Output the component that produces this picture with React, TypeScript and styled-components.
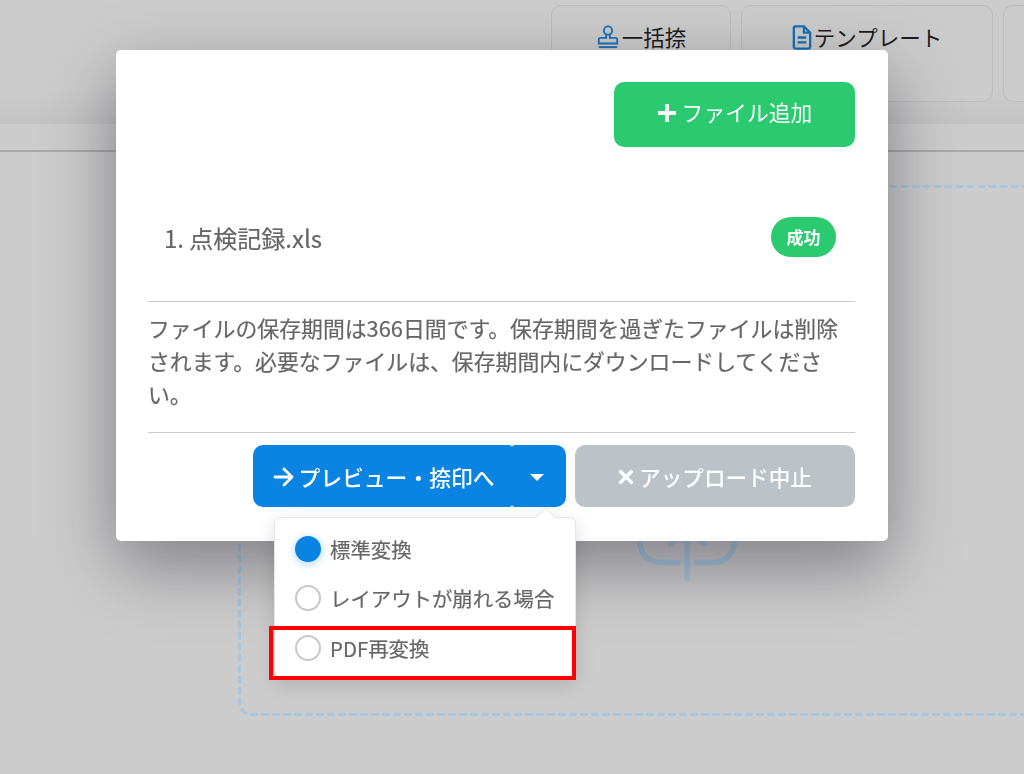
import React from 'react'
import styled, { createGlobalStyle } from 'styled-components'

const FONT = `'Noto Sans CJK JP', 'Noto Sans', sans-serif`

const Global = createGlobalStyle`
  html, body {
    margin: 0;
    padding: 0;
    height: 100%;
    overflow: hidden;
    background: #ccc;
    font-family: ${FONT};
  }
`

// the page sits dimmed behind the modal, so its colours are the dimmed ones
const Page = styled.div`
  width: 1180px;
  height: 774px;
  display: flex;
  flex-direction: column;
  background: #ccc;
`

const Header = styled.header`
  height: 124px;
  box-sizing: border-box;
  padding: 5px 0 0 551px;
  display: flex;
  gap: 10px;
  background: linear-gradient(#ccc 70%, #c3c3c3);
`

const Tab = styled.div<{ $width: number }>`
  width: ${(p) => p.$width}px;
  flex: none;
  height: 97px;
  box-sizing: border-box;
  padding-top: 15px;
  border: 1px solid #bcbcbc;
  border-radius: 10px;
  background: #cbcbcb;
  display: flex;
  justify-content: center;
  align-items: flex-start;
  gap: 2px;
  font-size: 21.5px;
  line-height: 32px;
  color: #1c1c1c;
  svg {
    flex: none;
    margin-top: 4px;
  }
`

const SubBar = styled.div`
  height: 28px;
  box-sizing: border-box;
  background: #ccc;
  border-bottom: 2px solid #a8a8a8;
`

const Main = styled.main`
  flex: 1;
  padding: 33px 0 0 238px;
`

const DropZone = styled.div`
  position: relative;
  width: 898px;
  height: 531px;
  box-sizing: border-box;
  display: flex;
  justify-content: center;
  padding-top: 309px;
`

const DashedEdge = styled.svg`
  position: absolute;
  inset: 0;
`

const Modal = styled.div`
  position: fixed;
  left: 116px;
  top: 50px;
  width: 772px;
  height: 491px;
  box-sizing: border-box;
  padding: 32px 33px 0 32px;
  background: #fff;
  border-radius: 5px;
  box-shadow: 0 25px 70px rgba(0, 0, 20, 0.38);
  color: #666;
  display: flex;
  flex-direction: column;
`

const TopRow = styled.div`
  display: flex;
  justify-content: flex-end;
`

const Button = styled.button<{ $bg: string }>`
  border: none;
  margin: 0;
  padding: 0;
  background: ${(p) => p.$bg};
  color: #fff;
  font-family: ${FONT};
  font-weight: 500;
  display: flex;
  align-items: center;
  justify-content: center;
`

const AddButton = styled(Button)`
  width: 241px;
  height: 65px;
  padding-bottom: 7px;
  border-radius: 10px;
  font-size: 21.8px;
  font-weight: 400;
  gap: 5px;
  svg {
    margin-top: 3px;
  }
`

const FileRow = styled.div`
  height: 155px;
  box-sizing: border-box;
  border-bottom: 1px solid #ccc;
  padding: 70px 19px 0 16px;
  display: flex;
  justify-content: space-between;
  align-items: flex-start;
`

const FileName = styled.span`
  margin-top: 1px;
  font-size: 24px;
  line-height: 40px;
  color: #666;
  -webkit-text-stroke: 0.2px #666;
`

const Badge = styled.span`
  width: 65px;
  height: 40px;
  border-radius: 20px;
  background: #2bc970;
  color: #fff;
  font-size: 17px;
  font-weight: 700;
  line-height: 40px;
  text-align: center;
`

const Note = styled.p`
  margin: 0;
  height: 131px;
  box-sizing: border-box;
  border-bottom: 1px solid #ccc;
  padding-top: 9px;
  font-size: 21.87px;
  line-height: 33px;
  color: #666;
  -webkit-text-stroke: 0.2px #666;
`

const Actions = styled.div`
  display: flex;
  justify-content: flex-end;
  gap: 9px;
  padding-top: 12px;
`

const SplitGroup = styled.div`
  display: flex;
`

const PreviewButton = styled(Button)`
  width: 259px;
  height: 62px;
  padding-left: 3px;
  border-radius: 10px 3px 3px 10px;
  font-size: 21.8px;
  gap: 4px;
  svg {
    margin-top: 2px;
  }
`

const CaretButton = styled(Button)`
  width: 54px;
  height: 62px;
  padding-right: 4px;
  border-radius: 3px 10px 10px 3px;
  &::before {
    content: '';
    border-top: 7px solid #fff;
    border-left: 7px solid transparent;
    border-right: 7px solid transparent;
    margin-top: 3px;
  }
`

const CancelButton = styled(Button)`
  width: 280px;
  height: 62px;
  border-radius: 10px;
  font-size: 21.6px;
  gap: 5px;
  svg {
    margin-top: 2px;
  }
`

const Popover = styled.div`
  position: fixed;
  left: 274px;
  top: 517px;
  width: 302px;
  height: 162px;
  box-sizing: border-box;
  padding: 6px 0 0 20px;
  background: #fff;
  border: 1px solid #e6e6e6;
  border-radius: 6px;
  box-shadow: 0 6px 20px rgba(0, 0, 0, 0.14);
  display: flex;
  flex-direction: column;
  &::before {
    content: '';
    position: absolute;
    left: 263px;
    top: -8px;
    width: 14px;
    height: 14px;
    background: #fff;
    border-left: 1px solid #e6e6e6;
    border-top: 1px solid #e6e6e6;
    transform: rotate(45deg);
  }
`

const Option = styled.label`
  height: 49.5px;
  display: flex;
  align-items: center;
  gap: 9px;
  font-size: 20.4px;
  color: #666;
  white-space: nowrap;
  -webkit-text-stroke: 0.2px #666;
`

const Radio = styled.span<{ $on?: boolean }>`
  width: 26px;
  height: 26px;
  flex: none;
  box-sizing: border-box;
  border-radius: 50%;
  border: 2px solid ${(p) => (p.$on ? '#0a84e3' : '#c8c8c8')};
  background: ${(p) => (p.$on ? '#0a84e3' : '#fff')};
  box-shadow: ${(p) => (p.$on ? '0 2px 8px rgba(10, 132, 227, 0.35)' : 'none')};
`

const Highlight = styled.div`
  position: fixed;
  left: 269px;
  top: 626px;
  width: 307px;
  height: 54px;
  box-sizing: border-box;
  border: 4px solid #f00;
  pointer-events: none;
`

const StampIcon = () => (
  <svg width="24" height="24" viewBox="0 0 24 26" fill="none" stroke="#1a6fb5" strokeWidth="2">
    <circle cx="12" cy="6" r="4.5" />
    <path d="M10 10.5 V14 H4 Q2 14 2 16 V20 H22 V16 Q22 14 20 14 H14 V10.5" />
    <path d="M2 24 H22" />
  </svg>
)

const DocIcon = () => (
  <svg width="20" height="25" viewBox="0 0 20 26" fill="none" stroke="#1a6fb5" strokeWidth="2.4">
    <path d="M3 1.5 H12 L18.5 8 V22 Q18.5 24.5 16 24.5 H4 Q1.5 24.5 1.5 22 V3 Q1.5 1.5 3 1.5 Z" />
    <path d="M12 1.5 V8 H18.5" />
    <path d="M5.5 13 H14.5 M5.5 18 H14.5" />
  </svg>
)

const UploadIcon = () => (
  <svg width="100" height="90" viewBox="0 0 100 90" fill="none" stroke="#a8c6dc" strokeWidth="5.5" strokeLinecap="round">
    <path d="M41 68.5 H24 C10 68.5 2.5 58 2.5 46 C2.5 34 10 28 22 28 C26 10 40 2 52 2 C68 2 78 14 80 28 C92 30 97.5 36 97.5 46 C97.5 58 90 68.5 76 68.5 H59" />
    <path d="M50 85 V33 M33 50 L50 33 L67 50" />
  </svg>
)

const PlusIcon = () => (
  <svg width="20" height="20" viewBox="0 0 20 20" stroke="#fff" strokeWidth="4">
    <path d="M10 1 V19 M1 10 H19" />
  </svg>
)

const ArrowIcon = () => (
  <svg width="21" height="20" viewBox="0 0 21 20" fill="none" stroke="#fff" strokeWidth="2.8" strokeLinecap="round" strokeLinejoin="round">
    <path d="M2 10 H19 M11 2 L19 10 L11 18" />
  </svg>
)

const CrossIcon = () => (
  <svg width="16" height="16" viewBox="0 0 18 18" stroke="#fff" strokeWidth="4" strokeLinecap="round">
    <path d="M3 3 L15 15 M15 3 L3 15" />
  </svg>
)

export default function App() {
  return (
    <>
      <Global />
      <Page>
        <Header>
          <Tab $width={180}>
            <StampIcon />
            一括捺
          </Tab>
          <Tab $width={252}>
            <DocIcon />
            テンプレート
          </Tab>
          <Tab $width={180} />
        </Header>
        <SubBar />
        <Main>
          <DropZone>
            <DashedEdge width="898" height="531" fill="none">
              <rect x="1.5" y="1.5" width="895" height="528" rx="12" stroke="#a9c6dc" strokeWidth="3" strokeDasharray="8 3" />
            </DashedEdge>
            <UploadIcon />
          </DropZone>
        </Main>
      </Page>
      <Modal>
        <TopRow>
          <AddButton $bg="#2bc970">
            <PlusIcon />
            ファイル追加
          </AddButton>
        </TopRow>
        <FileRow>
          <FileName>1. 点検記録.xls</FileName>
          <Badge>成功</Badge>
        </FileRow>
        <Note>
          ファイルの保存期間は366日間です。保存期間を過ぎたファイルは削除されます。必要なファイルは、保存期間内にダウンロードしてください。
        </Note>
        <Actions>
          <SplitGroup>
            <PreviewButton $bg="#0a84e3">
              <ArrowIcon />
              プレビュー・捺印へ
            </PreviewButton>
            <CaretButton $bg="#0a84e3" />
          </SplitGroup>
          <CancelButton $bg="#bbc3c9">
            <CrossIcon />
            アップロード中止
          </CancelButton>
        </Actions>
      </Modal>
      <Popover>
        <Option>
          <Radio $on />
          標準変換
        </Option>
        <Option>
          <Radio />
          レイアウトが崩れる場合
        </Option>
        <Option>
          <Radio />
          PDF再変換
        </Option>
      </Popover>
      <Highlight />
    </>
  )
}
